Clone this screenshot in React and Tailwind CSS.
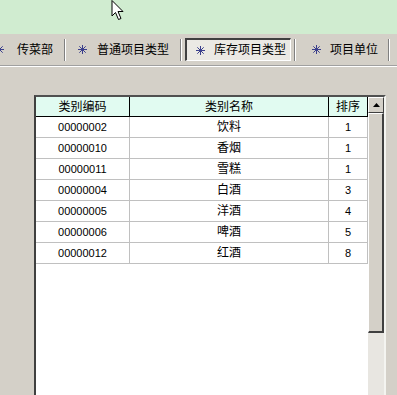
import React from "react";

const rows = [
  { code: "00000002", name: "饮料", order: "1" },
  { code: "00000010", name: "香烟", order: "1" },
  { code: "00000011", name: "雪糕", order: "1" },
  { code: "00000004", name: "白酒", order: "3" },
  { code: "00000005", name: "洋酒", order: "4" },
  { code: "00000006", name: "啤酒", order: "5" },
  { code: "00000012", name: "红酒", order: "8" },
];

function Star() {
  return (
    <svg width="9" height="9" viewBox="0 0 9 9" className="shrink-0">
      <g stroke="#3b3f8c" strokeWidth="1" fill="none">
        <line x1="4.5" y1="0" x2="4.5" y2="9" />
        <line x1="0" y1="4.5" x2="9" y2="4.5" />
        <line x1="1.3" y1="1.3" x2="7.7" y2="7.7" />
        <line x1="7.7" y1="1.3" x2="1.3" y2="7.7" />
      </g>
    </svg>
  );
}

function Sep() {
  return (
    <div className="h-[22px] w-[2px] flex shrink-0">
      <div className="w-[1px] bg-[#808080]" />
      <div className="w-[1px] bg-white" />
    </div>
  );
}

function Cursor() {
  return (
    <svg
      width="14"
      height="22"
      viewBox="0 0 14 22"
      className="absolute left-[111px] top-0"
    >
      <path
        d="M1 0.5 L1 16 L4.5 12.5 L7.5 19.5 L10 18.5 L7 11.5 L12 11.5 Z"
        fill="white"
        stroke="black"
        strokeWidth="1"
        strokeLinejoin="miter"
      />
    </svg>
  );
}

export default function App() {
  return (
    <div
      className="relative w-[397px] h-[395px] overflow-hidden bg-[#d4d0c8] text-black text-[12px]"
      style={{ fontFamily: '"Liberation Sans", "Noto Sans CJK SC", sans-serif' }}
    >
      {/* top bar */}
      <div className="h-[34px] bg-[#d0ecd0]" />

      {/* tabs */}
      <div className="h-[31px] flex items-center">
        <div className="w-[69px] flex items-center gap-[13px] -ml-[5px] shrink-0">
          <Star />
          <span>传菜部</span>
        </div>
        <Sep />
        <div className="w-[114px] flex items-center gap-[10px] pl-[12px] shrink-0">
          <Star />
          <span>普通项目类型</span>
        </div>
        <Sep />
        <div className="ml-[3px] w-[106px] h-[23px] flex items-center gap-[9px] pl-[9px] bg-[#ebe9e4] border-t-2 border-l-2 border-b border-r border-t-[#404040] border-l-[#404040] border-b-white border-r-white shrink-0">
          <Star />
          <span>库存项目类型</span>
        </div>
        <div className="w-[3px] shrink-0" />
        <Sep />
        <div className="w-[92px] flex items-center gap-[9px] pl-[16px] shrink-0">
          <Star />
          <span>项目单位</span>
        </div>
        <Sep />
      </div>
      <div className="h-[1px] bg-[#a0a0a0]" />
      <div className="h-[1px] bg-white" />

      {/* grid */}
      <div className="pt-[28px] pl-[34px]">
        <div className="w-[352px] h-[400px] flex border-t-2 border-l-2 border-t-[#505050] border-l-[#404040] border-r-2 border-r-[#f4f4f0]">
          <div className="flex-1 bg-white">
            <div className="h-[20px] flex bg-[#e1fbf1] border-b border-black">
              <div className="w-[94px] border-r border-black flex items-center justify-center">类别编码</div>
              <div className="w-[199px] border-r border-black flex items-center justify-center">类别名称</div>
              <div className="flex-1 border-r border-black flex items-center justify-center">排序</div>
            </div>
            {rows.map((r) => (
              <div key={r.code} className="h-[21px] flex border-b border-[#c0c0c0]">
                <div className="w-[94px] border-r border-[#c0c0c0] flex items-center justify-center text-[11px]">
                  {r.code}
                </div>
                <div className="w-[199px] border-r border-[#c0c0c0] flex items-center justify-center">
                  {r.name}
                </div>
                <div className="flex-1 border-r border-[#c0c0c0] flex items-center justify-center text-[11px]">
                  {r.order}
                </div>
              </div>
            ))}
          </div>

          {/* scrollbar */}
          <div className="w-[16px] flex flex-col bg-[#e8e6e1]">
            <div className="h-[16px] bg-[#d4d0c8] border-t border-l border-t-white border-l-white border-b border-r border-b-[#404040] border-r-[#404040] flex items-center justify-center">
              <svg width="7" height="4" viewBox="0 0 7 4">
                <path d="M3.5 0 L7 4 L0 4 Z" fill="black" />
              </svg>
            </div>
            <div className="h-[220px] bg-[#d4d0c8] border-t border-l border-t-white border-l-white border-b-2 border-r-2 border-b-[#404040] border-r-[#404040]" />
          </div>
        </div>
      </div>

      <Cursor />
    </div>
  );
}
